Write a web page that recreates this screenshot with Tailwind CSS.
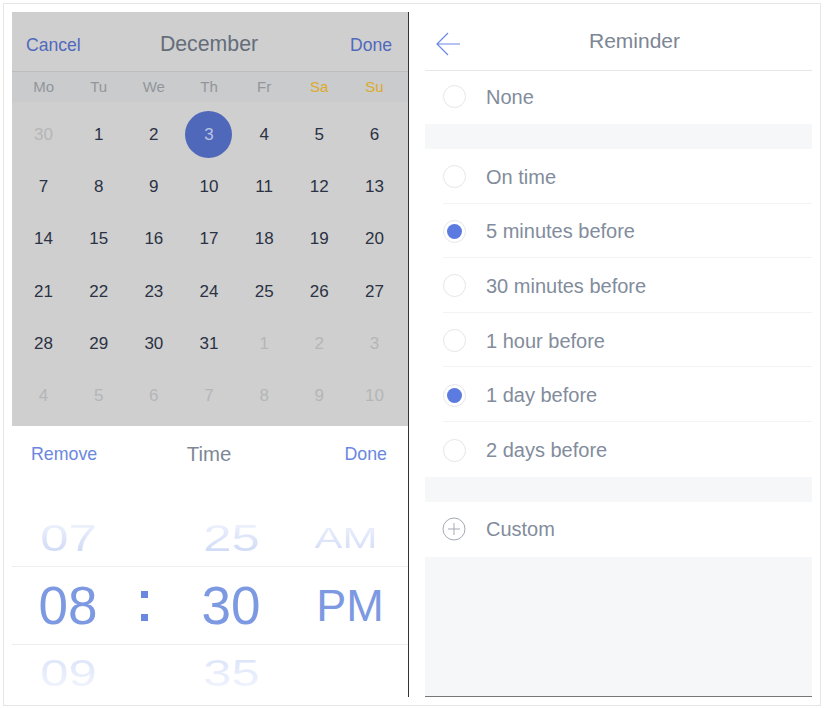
<!DOCTYPE html>
<html>
<head>
<meta charset="utf-8">
<script src="https://cdn.jsdelivr.net/npm/@tailwindcss/browser@4"></script>
</head>
<body class="bg-white font-['Liberation_Sans',Arial,sans-serif]">
<div class="w-[825px] h-[709px] overflow-hidden bg-white pt-[3px] pl-[3px]">
  <div class="w-[818px] h-[703px] bg-white border border-[#e6e6e6] pt-[8px] pl-[8px] flex">

    <!-- left panel -->
    <div class="w-[397px] h-[685px] border-r border-[#333333] flex flex-col overflow-hidden">
      <div class="h-[414px] shrink-0 w-[396px] bg-[#cfcfcf] flex flex-col">
        <div class="h-[60px] shrink-0 border-b border-[#bdbdbd] grid grid-cols-[1fr_auto_1fr] pl-[14px] pr-[16px] text-[#5169bd] text-[17.6px]">
          <span class="pt-[20px]">Cancel</span>
          <span class="pt-[17px] text-[21.3px] text-[#646d7a]">December</span>
          <span class="pt-[20px] text-right">Done</span>
        </div>
        <div class="h-[30px] shrink-0 bg-[#c9cbcd]">
          <div id="semana" class="h-[30px] grid grid-cols-7 w-[386px] ml-[4px] items-center text-center text-[15px] text-[#92969b]"></div>
        </div>
        <div id="dias" class="w-[386px] ml-[4px] grid grid-cols-7 auto-rows-[52.2px] pt-[6.6px] items-center text-center text-[17px] text-[#2a3244]"></div>
      </div>

      <div class="flex-1 bg-white relative">
        <div class="grid grid-cols-[1fr_auto_1fr] pl-[19px] pr-[21px] pt-[15px] text-[17.8px] text-[#6b88e0]">
          <span>Remove</span>
          <span class="text-[20.4px] -mt-[2px] text-[#7d8897]">Time</span>
          <span class="text-right">Done</span>
        </div>
        <div class="absolute left-0 right-0 top-[140px] h-[79px] border-y border-[#eeeeee]"></div>
        <div class="mt-[48px] h-[207px] grid grid-cols-[112px_40px_134px_104px] text-center overflow-hidden">
          <div class="flex flex-col items-center">
            <span class="text-[53px] leading-[40px] h-[40px] scale-y-[0.7] scale-x-[0.96] bg-linear-to-b from-[#edf1fc] to-[#cfdaf6] bg-clip-text text-transparent">07</span>
            <span class="text-[53px] leading-[60px] mt-[18px] text-[#7c99e2]">08</span>
            <span class="text-[53px] leading-[40px] h-[40px] mt-[17px] scale-y-[0.7] scale-x-[0.96] bg-linear-to-b from-[#dde5f9] to-[#f0f3fd] bg-clip-text text-transparent">09</span>
          </div>
          <div class="flex flex-col items-center pt-[73px] gap-[16px]">
            <span class="w-[7px] h-[7px] bg-[#6b88e0]"></span>
            <span class="w-[7px] h-[7px] bg-[#6b88e0]"></span>
          </div>
          <div class="flex flex-col items-center">
            <span class="text-[53px] leading-[40px] h-[40px] scale-y-[0.7] scale-x-[0.96] bg-linear-to-b from-[#edf1fc] to-[#cfdaf6] bg-clip-text text-transparent">25</span>
            <span class="text-[53px] leading-[60px] mt-[18px] text-[#7c99e2]">30</span>
            <span class="text-[53px] leading-[40px] h-[40px] mt-[17px] scale-y-[0.7] scale-x-[0.96] bg-linear-to-b from-[#dde5f9] to-[#f0f3fd] bg-clip-text text-transparent">35</span>
          </div>
          <div class="flex flex-col items-center">
            <span class="text-[42px] leading-[40px] h-[40px] mr-[8px] scale-y-[0.7] bg-linear-to-b from-[#edf1fc] to-[#d3ddf7] bg-clip-text text-transparent">AM</span>
            <span class="text-[45px] leading-[60px] mt-[18px] text-[#7c99e2]">PM</span>
          </div>
        </div>
      </div>
    </div>

    <!-- right panel -->
    <div class="ml-[16px] w-[387px] h-[685px] flex flex-col text-[20px] text-[#828c9c]">
      <div class="h-[59px] shrink-0 border-b border-[#e6e6e6] relative flex justify-center pl-[32px] pt-[17px] text-[21px] leading-[24px] text-[#7d8694]">
        <svg class="absolute left-[11px] top-[20px]" width="25" height="24" viewBox="0 0 25 24" fill="none" stroke="#6b88e0" stroke-width="1.2"><path d="M12 1 L1 12 L12 23 M1 12 H24"/></svg>
        Reminder
      </div>
      <div id="ninguno"></div>
      <div class="h-[25px] shrink-0 bg-[#f6f7f9]"></div>
      <div id="opciones"></div>
      <div class="h-[25px] shrink-0 bg-[#f6f7f9]"></div>
      <div class="h-[55px] shrink-0 flex items-center bg-white">
        <svg class="ml-[17px] mr-[20px]" width="24" height="24" viewBox="0 0 24 24" fill="none" stroke="#a3a9b3" stroke-width="1"><circle cx="12" cy="12" r="11"/><path d="M12 6 V18 M6 12 H18"/></svg>
        Custom
      </div>
      <div class="flex-1 bg-[#f6f7f9] border-b border-[#777777]"></div>
    </div>
  </div>
</div>

<script>
  // Calendario
  const semana = ['Mo','Tu','We','Th','Fr','Sa','Su'];
  document.getElementById('semana').innerHTML = semana.map(d =>
    `<span class="${d === 'Sa' || d === 'Su' ? 'text-[#dfa929]' : ''}">${d}</span>`).join('');

  const dias = [30];
  for (let i = 1; i <= 31; i++) dias.push(i);
  [1,2,3,4,5,6,7,8,9,10].forEach(d => dias.push(d));
  document.getElementById('dias').innerHTML = dias.map((d, i) => {
    const fuera = i === 0 || i > 31;
    if (i === 3) {
      return `<span class="justify-self-center w-[47px] h-[47px] rounded-full bg-[#5068b9] text-[#b9c4e4] flex items-center justify-center">${d}</span>`;
    }
    return `<span class="${fuera ? 'text-[#b4b6b8]' : ''}">${d}</span>`;
  }).join('');

  // Opciones
  const fila = (texto, activo, borde, alto) => `
    <div class="${alto} flex items-center ml-[18px] ${borde ? 'border-b border-[#f3f3f3]' : ''}">
      <span class="w-[23px] h-[23px] rounded-full border border-[#e6e6e6] flex items-center justify-center mr-[20px]">
        ${activo ? '<span class="w-[15px] h-[15px] rounded-full bg-[#5b7be0]"></span>' : ''}
      </span>
      ${texto}
    </div>`;
  document.getElementById('ninguno').innerHTML = fila('None', false, false, 'h-[53px] pb-[2px]');
  document.getElementById('opciones').innerHTML = [
    ['On time', false], ['5 minutes before', true], ['30 minutes before', false],
    ['1 hour before', false], ['1 day before', true], ['2 days before', false]
  ].map((o, i) => fila(o[0], o[1], i < 5, 'h-[54.6px] pt-[2px]')).join('');
</script>
</body>
</html>
